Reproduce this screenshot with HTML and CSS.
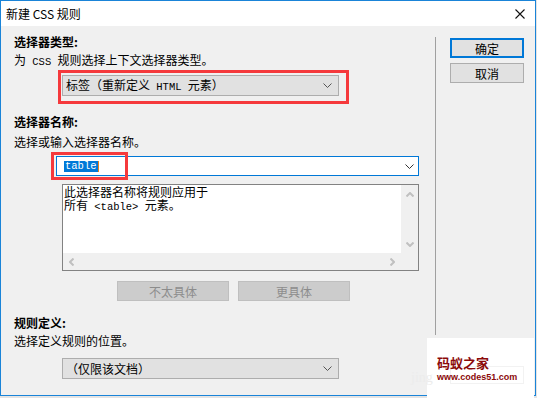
FILE: index.html
```html
<!DOCTYPE html>
<html lang="zh-CN">
<head>
    <meta charset="UTF-8">
    <meta name="viewport" content="width=device-width, initial-scale=1.0">
    <title>新建 CSS 规则</title>
    <link rel="stylesheet" href="styles.css">
</head>
<body>

<div class="dialog">
    <div class="titlebar">
        <span class="title">新建 CSS 规则</span>
        <svg class="close" width="10" height="10" viewBox="0 0 10 10">
            <path d="M0.5 0.5L9.5 9.5M9.5 0.5L0.5 9.5" stroke="#111" stroke-width="1.1" fill="none"/>
        </svg>
    </div>

    <div class="content">
        <div class="main">
            <div class="heading">选择器类型:</div>
            <div class="desc">为<span class="en"> CSS </span>规则选择上下文选择器类型。</div>
            <div class="mark-box">
                <div class="select">
                    <span>标签（重新定义<span class="en"> HTML </span>元素）</span>
                    <svg class="chevron" width="9" height="5" viewBox="0 0 9 5"><path d="M0.5 0.5L4.5 4.5L8.5 0.5" stroke="#555" fill="none"/></svg>
                </div>
            </div>

            <div class="heading heading-2">选择器名称:</div>
            <div class="desc desc-2">选择或输入选择器名称。</div>
            <div class="combo">
                <span class="selected">table</span><span class="caret"></span>
                <svg class="chevron chevron-dark" width="9" height="5" viewBox="0 0 9 5"><path d="M0.5 0.5L4.5 4.5L8.5 0.5" stroke="#333" fill="none"/></svg>
                <div class="mark-overlay"></div>
            </div>

            <div class="rule-box">
                <div class="rule-text">
                    <div>此选择器名称将规则应用于</div>
                    <div>所有<span class="en"> &lt;table&gt; </span>元素。</div>
                </div>
                <div class="vscroll">
                    <svg width="8" height="5" viewBox="0 0 8 5"><path d="M0.5 4.5L4 1L7.5 4.5" stroke="#c0c0c0" stroke-width="2" fill="none"/></svg>
                    <svg width="8" height="5" viewBox="0 0 8 5"><path d="M0.5 0.5L4 4L7.5 0.5" stroke="#c0c0c0" stroke-width="2" fill="none"/></svg>
                </div>
                <div class="hscroll">
                    <svg width="5" height="8" viewBox="0 0 5 8"><path d="M4.5 0.5L1 4L4.5 7.5" stroke="#c0c0c0" stroke-width="2" fill="none"/></svg>
                    <svg width="5" height="8" viewBox="0 0 5 8"><path d="M0.5 0.5L4 4L0.5 7.5" stroke="#c0c0c0" stroke-width="2" fill="none"/></svg>
                </div>
                <div class="corner"></div>
            </div>

            <div class="specific-row">
                <button type="button" class="btn-disabled">不太具体</button>
                <button type="button" class="btn-disabled">更具体</button>
            </div>

            <div class="heading heading-3">规则定义:</div>
            <div class="desc">选择定义规则的位置。</div>
            <div class="select select-3">
                <span>（仅限该文档）</span>
                <svg class="chevron" width="9" height="5" viewBox="0 0 9 5"><path d="M0.5 0.5L4.5 4.5L8.5 0.5" stroke="#555" fill="none"/></svg>
            </div>
        </div>

        <div class="separator"></div>

        <div class="side">
            <button type="button" class="btn btn-default">确定</button>
            <button type="button" class="btn">取消</button>
        </div>
    </div>
</div>

<!-- watermark pasted over the corner of the screenshot -->
<div class="watermark">
    <span class="ghost-logo">jing</span>
    <span class="ghost-btn"></span>
    <div class="wm-name">码蚁之家</div>
    <div class="wm-url">www.codes51.com</div>
</div>

</body>
</html>
```

FILE: styles.css
```css
* {
    box-sizing: border-box;
}

html {
    background-color: #e4e4e4;
}

body {
    margin: 0;
    font-family: "Noto Sans CJK SC", "Microsoft YaHei", sans-serif;
    font-size: 12px;
    color: #000;
}

.en {
    font-family: "Liberation Mono", monospace;
    font-size: 10.5px;
}

.dialog {
    width: 536px;
    height: 396px;
    border: 1px solid #1a84d8;
    background-color: #f0f0f0;
    display: flex;
    flex-direction: column;
}

.titlebar {
    height: 25px;
    flex-shrink: 0;
    background-color: #fff;
    display: flex;
    align-items: center;
    justify-content: space-between;
    padding: 0 10px 0 5px;
}

.title {
    line-height: 16px;
}

.content {
    flex: 1;
    display: flex;
}

.main {
    width: 434px;
    padding: 7px 0 0 13px;
}

.heading {
    font-weight: bold;
    line-height: 18px;
}

.desc {
    line-height: 18px;
}

.heading-2 {
    margin-top: 9px;
}

.desc-2 {
    margin-top: 2px;
}

.heading-3 {
    margin-top: 13px;
}

.mark-box {
    width: 291px;
    height: 34px;
    margin: -1px 0 0 44px;
    border: 3px solid #f5393c;
    padding: 2px 0 0 1px;
}

.select {
    width: 277px;
    height: 21px;
    background-color: #e1e1e1;
    border: 1px solid #adadad;
    display: flex;
    align-items: center;
    justify-content: space-between;
    padding: 0 6px 0 3px;
    line-height: 16px;
}

.select-3 {
    margin: 8px 0 0 48px;
}

.chevron {
    display: block;
}

.combo {
    position: relative;
    width: 363px;
    height: 20px;
    margin: 5px 0 0 42px;
    background-color: #fff;
    border: 1px solid #0078d7;
    display: flex;
    align-items: center;
    padding: 0 4px 0 7px;
}

.selected {
    font-family: "Liberation Mono", monospace;
    font-size: 10.5px;
    line-height: 11px;
    height: 11px;
    padding: 0 1px;
    background-color: #0078d7;
    color: #fff;
}

.caret {
    width: 1px;
    height: 11px;
    background-color: #e8821e;
}

.chevron-dark {
    margin-left: auto;
}

.mark-overlay {
    position: absolute;
    left: -6px;
    top: -5px;
    width: 77px;
    height: 28px;
    border: 3px solid #f5393c;
}

.rule-box {
    width: 357px;
    height: 87px;
    margin: 8px 0 0 48px;
    border: 1px solid #828282;
    display: grid;
    grid-template-columns: 1fr 17px;
    grid-template-rows: 1fr 17px;
}

.rule-text {
    background-color: #fff;
    padding: 0 0 0 1px;
    line-height: 13px;
    font-size: 12px;
    white-space: nowrap;
}

.vscroll {
    background-color: #f0f0f0;
    display: flex;
    flex-direction: column;
    justify-content: space-between;
    align-items: center;
    padding: 7px 0 6px;
}

.hscroll {
    background-color: #f0f0f0;
    display: flex;
    justify-content: space-between;
    align-items: center;
    padding: 0 6px 0 6px;
}

.corner {
    background-color: #f0f0f0;
}

.specific-row {
    display: flex;
    gap: 9px;
    margin: 10px 0 0 103px;
}

button {
    font-family: inherit;
    font-size: 12px;
    padding: 0;
    margin: 0;
}

.btn-disabled {
    width: 112px;
    height: 20px;
    background-color: #cccccc;
    border: 1px solid #bfbfbf;
    color: #8c8c8c;
}

.separator {
    width: 1px;
    height: 298px;
    margin-top: 11px;
    background-color: #a0a0a0;
}

.side {
    padding: 12px 0 0 14px;
    display: flex;
    flex-direction: column;
    gap: 5px;
}

.btn {
    width: 74px;
    height: 20px;
    background-color: #e1e1e1;
    border: 1px solid #adadad;
    color: #000;
}

.btn-default {
    border: 2px solid #0078d7;
}

.watermark {
    position: absolute;
    left: 427px;
    top: 338px;
    width: 107px;
    height: 60px;
    background-color: #fff;
    padding: 17px 0 0 10px;
}

.ghost-logo {
    position: absolute;
    left: -16px;
    top: 32px;
    font-family: "Liberation Serif", serif;
    font-size: 14px;
    color: #ececec;
}

.ghost-btn {
    position: absolute;
    left: 23px;
    top: 28px;
    width: 74px;
    height: 18px;
    border: 1px solid #f2f2f2;
}

.wm-name {
    position: relative;
    font-family: "Noto Sans CJK SC", serif;
    font-weight: bold;
    font-size: 13px;
    line-height: 15px;
    color: #8b0a0a;
}

.wm-url {
    position: relative;
    margin-top: 2px;
    font-family: "Liberation Sans", sans-serif;
    font-weight: bold;
    font-size: 9px;
    line-height: 10px;
    color: #8b0a0a;
}
```
